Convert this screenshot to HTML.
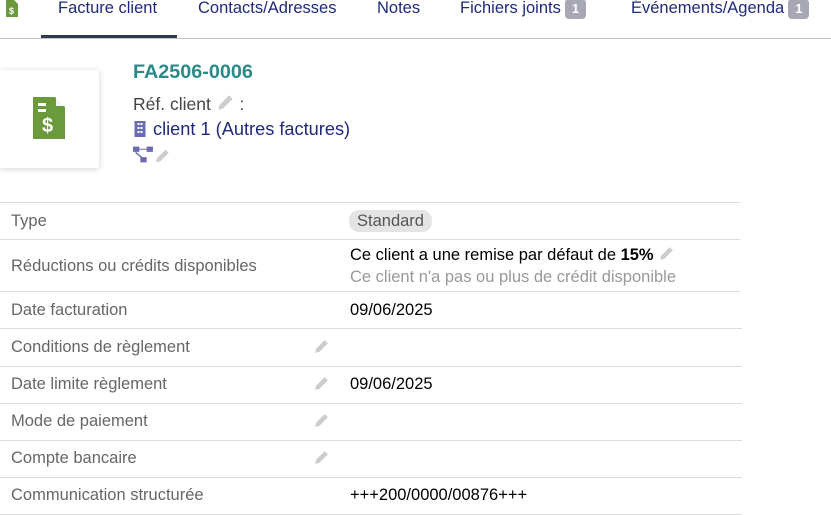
<!DOCTYPE html>
<html><head><meta charset="utf-8"><style>
*{margin:0;padding:0;box-sizing:border-box}
body{width:831px;height:515px;overflow:hidden;background:#fff;font-family:"Liberation Sans",Arial,sans-serif;font-size:16.5px;position:relative;color:#000}
.a{position:absolute;white-space:nowrap}
.tab{color:#1f2a78;top:-2px;line-height:20px;font-size:16.5px}
.badge{display:inline-block;background:#a8a8b4;color:#fff;font-size:13px;font-weight:bold;border-radius:4px;padding:1px 7px;line-height:18px;vertical-align:0;margin-left:4px}
.lbl{color:#666;left:11px}
.hl{position:absolute;left:0;height:1px;background:#dcdcdc}
.pen{position:absolute;width:17px;height:17px}
</style></head><body>
<svg class="a" style="left:6px;top:0" width="12" height="17" viewBox="0 0 12 17"><path d="M0 0h8l4 4v13H0z" fill="#6b9a3a"/><text x="3" y="14" font-size="9" fill="#fff" font-family="Liberation Sans" font-weight="bold">$</text></svg>
<div class="a tab" style="left:58px">Facture client</div>
<div class="a tab" style="left:198px">Contacts/Adresses</div>
<div class="a tab" style="left:377px">Notes</div>
<div class="a tab" style="left:460px">Fichiers joints<span class="badge">1</span></div>
<div class="a tab" style="left:631px">Événements/Agenda<span class="badge">1</span></div>
<div class="a" style="left:41px;top:35px;width:136px;height:3px;background:#2c3a4e"></div>
<div class="a" style="left:0;top:38px;width:831px;height:1px;background:#c4c4c4"></div>

<div class="a" style="left:0;top:70px;width:99px;height:98px;background:#fff;box-shadow:0 1px 6px rgba(0,0,0,.18)"></div>
<svg class="a" style="left:33px;top:97px" width="32" height="42" viewBox="0 0 32 42"><path d="M0 0h22l10 10v32H0z" fill="#6b9a3a"/><path d="M23 0l9 9h-9z" fill="#fff" opacity=".9"/><rect x="5" y="6" width="8" height="3" fill="#fff"/><rect x="5" y="12" width="8" height="3" fill="#fff"/><text x="9" y="35" font-size="20" font-weight="bold" fill="#fff" font-family="Liberation Sans">$</text></svg>

<div class="a" style="left:133px;top:61px;font-size:19.8px;font-weight:bold;color:#2a8a88">FA2506-0006</div>
<div class="a" style="left:133px;top:93px;font-size:17.5px;color:#444">Réf. client <svg width="19" height="19" viewBox="0 0 16 16" style="vertical-align:-2px"><path d="M2 14l1-4 8-8 3 3-8 8z" fill="#ccc"/></svg> :</div>
<svg class="a" style="left:133px;top:121px" width="14" height="16" viewBox="0 0 11 16"><rect width="11" height="16" fill="#6b6bb0"/><g fill="#fff"><rect x="3" y="2" width="2" height="2"/><rect x="6" y="2" width="2" height="2"/><rect x="3" y="6" width="2" height="2"/><rect x="6" y="6" width="2" height="2"/><rect x="3" y="10" width="2" height="2"/><rect x="6" y="10" width="2" height="2"/></g></svg>
<div class="a" style="left:153px;top:119px;font-size:18.2px;color:#1f2a78">client 1 (Autres factures)</div>
<svg class="a" style="left:133px;top:145px" width="42" height="19" viewBox="0 0 40 17"><g fill="#6b6bb0"><rect x="0" y="1" width="6" height="5"/><rect x="13" y="1" width="6" height="5"/><rect x="7" y="11" width="6" height="5"/><path d="M6 3h7v1H6zM3 6l6 5-1 1-6-5z"/></g><path d="M22 16l1-4 8-8 3 3-8 8z" fill="#ccc"/></svg>

<div class="hl" style="top:202px;width:740px"></div>
<div class="hl" style="top:239px;width:740px"></div>
<div class="hl" style="top:291px;width:740px"></div>
<div class="hl" style="top:328px;width:742px"></div>
<div class="hl" style="top:366px;width:742px"></div>
<div class="hl" style="top:403px;width:742px"></div>
<div class="hl" style="top:440px;width:742px"></div>
<div class="hl" style="top:477px;width:742px"></div>
<div class="hl" style="top:514px;width:742px"></div>

<div class="a lbl" style="top:212px">Type</div>
<div class="a" style="left:349px;top:210px;background:#e4e4e4;color:#555;border-radius:10px;padding:0 8px;line-height:22px">Standard</div>
<div class="a lbl" style="top:257px">Réductions ou crédits disponibles</div>
<div class="a" style="left:350px;top:245px">Ce client a une remise par défaut de <b>15%</b> <svg width="17" height="17" viewBox="0 0 16 16" style="vertical-align:-2px"><path d="M2 14l1-4 8-8 3 3-8 8z" fill="#ccc"/></svg></div>
<div class="a" style="left:350px;top:268px;color:#999">Ce client n'a pas ou plus de crédit disponible</div>
<div class="a lbl" style="top:301px">Date facturation</div>
<div class="a" style="left:350px;top:301px">09/06/2025</div>
<div class="a lbl" style="top:338px">Conditions de règlement</div>
<div class="a lbl" style="top:375px">Date limite règlement</div>
<div class="a" style="left:350px;top:375px">09/06/2025</div>
<div class="a lbl" style="top:412px">Mode de paiement</div>
<div class="a lbl" style="top:449px">Compte bancaire</div>
<div class="a lbl" style="top:486px">Communication structurée</div>
<div class="a" style="left:350px;top:486px">+++200/0000/00876+++</div>

<svg class="pen" style="left:313px;top:338px" viewBox="0 0 16 16"><path d="M2 14l1-4 8-8 3 3-8 8z" fill="#ccc"/></svg>
<svg class="pen" style="left:313px;top:375px" viewBox="0 0 16 16"><path d="M2 14l1-4 8-8 3 3-8 8z" fill="#ccc"/></svg>
<svg class="pen" style="left:313px;top:412px" viewBox="0 0 16 16"><path d="M2 14l1-4 8-8 3 3-8 8z" fill="#ccc"/></svg>
<svg class="pen" style="left:313px;top:449px" viewBox="0 0 16 16"><path d="M2 14l1-4 8-8 3 3-8 8z" fill="#ccc"/></svg>
</body></html>
